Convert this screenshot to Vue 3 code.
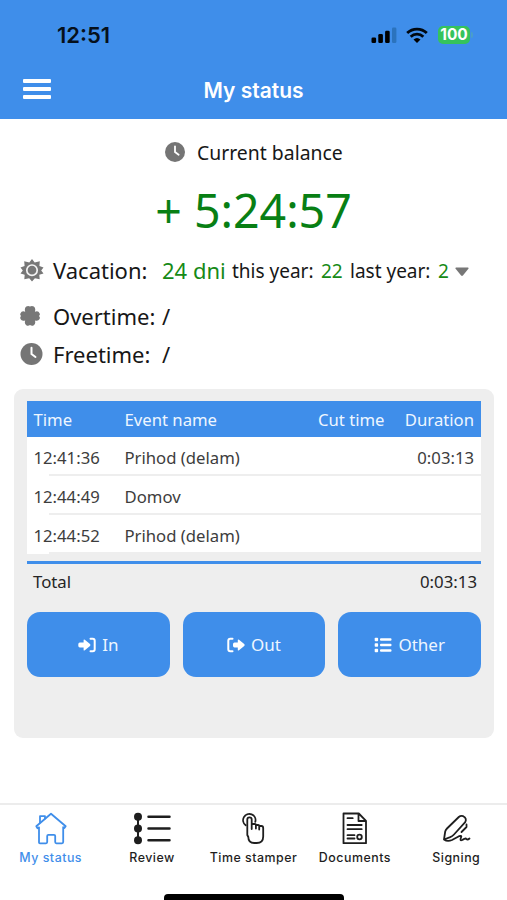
<script setup>
const events = [
  { time: '12:41:36', name: 'Prihod (delam)', cut: '', duration: '0:03:13' },
  { time: '12:44:49', name: 'Domov', cut: '', duration: '' },
  { time: '12:44:52', name: 'Prihod (delam)', cut: '', duration: '' },
]
const tabs = [
  { id: 'home', label: 'My status' },
  { id: 'review', label: 'Review' },
  { id: 'stamper', label: 'Time stamper' },
  { id: 'documents', label: 'Documents' },
  { id: 'signing', label: 'Signing' },
]
</script>

<template>
  <div class="screen">
    <header class="top">
      <div class="statusbar">
        <span class="clock">12:51</span>
        <div class="indicators">
          <svg class="signal" width="26" height="17" viewBox="0 0 26 17">
            <rect x="0.5" y="10.5" width="4.6" height="5.5" rx="1.3" />
            <rect x="7.3" y="7" width="4.6" height="9" rx="1.3" />
            <rect x="14.1" y="3.8" width="4.6" height="12.2" rx="1.3" />
            <rect x="21" y="0.5" width="4.4" height="15.5" rx="1.3" fill="#2b73bd" />
          </svg>
          <svg class="wifi" width="22" height="17" viewBox="0 0 22 17">
            <g fill="none" stroke="#000810" stroke-width="2.8">
              <path d="M1.2 6.1a14 14 0 0 1 19.6 0" />
              <path d="M4.7 9.7a9 9 0 0 1 12.6 0" />
            </g>
            <path d="M7.5 12.5a5.2 5.2 0 0 1 7 0L11 16z" />
          </svg>
          <span class="battery">100</span>
          <span class="battery-tip"></span>
        </div>
      </div>
      <div class="titlebar">
        <div class="burger"><i></i><i></i><i></i></div>
        <h1>My status</h1>
      </div>
    </header>

    <main>
      <div class="balance-label">
        <svg width="20" height="20" viewBox="0 0 22 22">
          <circle cx="11" cy="11" r="11" fill="#757575" />
          <path d="M11 4.8V11l4 3" fill="none" stroke="#fff" stroke-width="2" stroke-linecap="round" />
        </svg>
        <span>Current balance</span>
      </div>
      <div class="balance">+ 5:24:57</div>

      <div class="row vacation">
        <svg class="row-icon" width="24" height="24" viewBox="0 0 24 24">
          <path fill="#777" d="M12 1l2.7 3.4L19.8 3.3l-.4 4.8L23.500 9.500l-2.300 2.900 2.300 3.100-4.200 1.300.4 4.500-4.800-1L12 23.500l-2.800-3.200-4.900 1 .4-4.500L.5 15.500l2.300-3.100L.5 9.500l4.100-1.400-.4-4.800 5.100 1.100z" />
          <circle cx="12" cy="12.200" r="5.200" fill="none" stroke="#f4f4f4" stroke-width="1.700" />
        </svg>
        <span class="row-label">Vacation:</span>
        <span class="days">24 dni</span>
        <span class="small this-year">this year:</span>
        <span class="small green n22">22</span>
        <span class="small last-year">last year:</span>
        <span class="small green n2">2</span>
        <svg class="caret" width="14" height="10" viewBox="0 0 14 10">
          <path d="M1 .6h12q1 .3.4 1.200L7.900 8.500q-.9.900-1.800 0L.6 1.800Q0 .9 1 .6z" fill="#777" />
        </svg>
      </div>
      <div class="row overtime">
        <svg class="row-icon" width="24" height="24" viewBox="0 0 24 24">
          <path fill="#777" d="M10 2.600Q12 1.200 13.800 2.600 16 4 14.900 7.700 18.500 6.600 19.400 8.900 20.600 10.600 19 12q1.600 1.500.4 3.300-1 2-4.500 1.100 1.100 3.500-1.100 4.800-1.900 1.300-3.800-.2-1.900 1.500-3.700.2Q4.100 19.900 5.200 16.400 1.600 17.400.7 15.300-.4 13.400 1.100 12-.5 10.500.7 8.900 1.600 6.600 5.200 7.700 4.100 4 6.300 2.600 8.100 1.200 10 2.600z" />
        </svg>
        <span class="row-label">Overtime:</span><span class="slash">/</span>
      </div>
      <div class="row freetime">
        <svg class="row-icon" width="24" height="24" viewBox="0 0 24 24">
          <circle cx="11.500" cy="12" r="11" fill="#757575" />
          <path d="M11.500 5.800V12l4 3" fill="none" stroke="#fff" stroke-width="2" stroke-linecap="round" />
        </svg>
        <span class="row-label">Freetime:</span><span class="slash">/</span>
      </div>

      <section class="panel">
        <div class="line head">
          <span>Time</span><span>Event name</span><span class="right cut">Cut time</span><span class="right">Duration</span>
        </div>
        <div v-for="e in events" :key="e.time" class="line entry">
          <span>{{ e.time }}</span><span>{{ e.name }}</span><span class="right cut">{{ e.cut }}</span><span class="right">{{ e.duration }}</span>
        </div>
        <div class="rule"></div>
        <div class="total"><span>Total</span><span>0:03:13</span></div>
        <div class="actions">
          <button>
            <svg width="18" height="16" viewBox="0 0 18 16">
              <path fill="#fff" d="M.3 7.200q0-1.800 1.500-1.800h3.800V3.300q0-1.400 1.200-.5L12 7q.9 1 0 2L6.800 13.200q-1.200.9-1.200-.5v-2.100H1.800Q.3 10.600.3 8.800z" />
              <path fill="none" stroke="#fff" stroke-width="2" stroke-linecap="round" d="M12.500 1.700h2.200q2 0 2 2v8.600q0 2-2 2h-2.200" />
            </svg>
            <span>In</span>
          </button>
          <button>
            <svg width="18" height="16" viewBox="0 0 18 16">
              <path fill="#fff" d="M6 7.200q0-1.800 1.500-1.800h3.300V3.300q0-1.400 1.200-.5L17.200 7q.9 1 0 2L12 13.200q-1.200.9-1.200-.5v-2.100H7.500Q6 10.600 6 8.800z" />
              <path fill="none" stroke="#fff" stroke-width="2" stroke-linecap="round" d="M5.500 1.700H3.300q-2 0-2 2v8.600q0 2 2 2h2.200" />
            </svg>
            <span>Out</span>
          </button>
          <button>
            <svg width="18" height="16" viewBox="0 0 18 16">
              <g fill="#fff">
                <rect x=".7" y=".8" width="3.400" height="3.400" rx=".8" /><rect x=".7" y="6.300" width="3.400" height="3.400" rx=".8" /><rect x=".7" y="11.800" width="3.400" height="3.400" rx=".8" />
                <rect x="6" y="1.300" width="11.500" height="2.400" rx="1" /><rect x="6" y="6.800" width="11.500" height="2.400" rx="1" /><rect x="6" y="12.300" width="11.500" height="2.400" rx="1" />
              </g>
            </svg>
            <span>Other</span>
          </button>
        </div>
      </section>
    </main>

    <nav>
      <a v-for="t in tabs" :key="t.id" :class="{ active: t.id === 'home' }">
        <svg v-if="t.id === 'home'" width="40" height="34" viewBox="0 0 40 34" class="outline">
          <path d="M5.300 14.200 20 1.800l14.700 12.400-1.300 1.800-1.200-.9v15q0 1.200-1.200 1.200h-5.600q-1.200 0-1.200-1.200v-6.100q0-1.200-1.200-1.200h-5.600q-1.200 0-1.200 1.200v6.100q0 1.200-1.200 1.200H9.200Q8 31.500 8 30.300v-15l-1.500.9z" />
          <path d="M9 10.500V4.200h5v2.300" />
        </svg>
        <svg v-else-if="t.id === 'review'" width="40" height="34" viewBox="0 0 40 34" class="outline">
          <path d="M6 5v23.500" stroke-width="2" />
          <g fill="currentColor" stroke="none"><circle cx="6" cy="4.800" r="4" /><circle cx="6" cy="16.500" r="4" /><circle cx="6" cy="28.200" r="4" /></g>
          <path d="M16.500 4.800h21M16.500 16.500h21M16.500 28.200h21" stroke-width="2.500" />
        </svg>
        <svg v-else-if="t.id === 'stamper'" width="40" height="34" viewBox="-1.500 0 40 34" class="outline">
          <path d="M11.200 13.200A6.200 6.200 0 1 1 20.800 9.800" />
          <path d="M12.800 23V7.600q0-2.300 2.200-2.300t2.200 2.300v9.500V13q0-1 1.200-1h2q1 0 1 1v3.500V14q0-1 1-1h1.300q1 0 1 1v3.500V15q0-1 1-1h1.200q1.800 0 1.800 2v8.500q0 6.500-6.500 6.500h-2.500q-5.900 0-5.900-6z" />
        </svg>
        <svg v-else-if="t.id === 'documents'" width="40" height="34" viewBox="0 0 40 34" class="outline">
          <path d="M8.500 1.500h15.300l7.200 7.300v22.400H8.500zM23.500 1.700V9H31" />
          <path d="M12.500 6.200h5.200M12.500 13h14.200M12.500 17.200h14.200M12.500 23.200h7M12.500 26.500h7" />
          <circle cx="24.500" cy="25" r="2.300" />
        </svg>
        <svg v-else width="40" height="34" viewBox="0 0 40 34" class="outline">
          <path d="M8 27.500l1.200-8q.4-1.600 1.800-3L22.800 5q2-1.700 4.400-.8 4 2 2 6L18 22.500q-1.800 1.900-3.800 2.700zM8 27.500q3.500 2.500 8 .5l7-3.800q3.300-1.200 2 1.500-1.500 3.500 1.300 2.300 3.200-2.500 4.200-.8 1.200.8 3-.7M30.500 12.500v2.500L25.500 20" />
        </svg>
        <span :class="'label-' + t.id">{{ t.label }}</span>
      </a>
      <div class="home-indicator"></div>
    </nav>
  </div>
</template>

<style>
body { background: #fff; overflow: hidden; }
</style>

<style scoped>
* { box-sizing: border-box; }
.screen { width: 507px; height: 900px; display: flex; flex-direction: column; position: relative; overflow: hidden; background: #fff; color: #171717; font-family: "Noto Sans", sans-serif; white-space: nowrap; }
svg { display: block; flex: none; }
.top { height: 119px; background: #3f8eea; flex: none; }
.statusbar { height: 62px; padding: 8px 34px 0 57px; display: flex; justify-content: space-between; align-items: center; }
.clock { font: 600 22px/24px Inter, sans-serif; color: #06101b; }
.indicators { display: flex; align-items: center; color: #000810; }
.wifi { margin-left: 9px; }
.battery { width: 32px; height: 18px; margin-left: 10px; border-radius: 5px; background: #35c35c; color: #fff; font: 700 15.500px/18px Inter, sans-serif; text-align: center; }
.battery-tip { width: 2px; height: 6px; margin-left: 1px; border-radius: 0 2px 2px 0; background: #4a9fc8; }
.titlebar { height: 57px; display: grid; grid-template-columns: 100px 1fr 100px; align-items: center; }
.burger { padding: 0 0 4px 23px; display: flex; flex-direction: column; gap: 4px; }
.burger i { width: 28px; height: 4px; background: #fff; border-radius: 1px; }
h1 { margin: 0; text-align: center; color: #fff; font: 600 21px/26px Inter, sans-serif; }
main { flex: 1; }
.balance-label { margin-top: 19px; height: 28px; padding-left: 165px; display: flex; align-items: center; gap: 12px; font-size: 19.400px; }
.balance { height: 66px; margin-top: 11px; text-align: center; font-size: 46.500px; line-height: 66px; color: #087f14; }
.row { display: flex; align-items: center; height: 38px; padding-left: 20px; font-size: 22px; }
.row-label { margin-left: 9px; width: 109px; }
.vacation { margin-top: 8px; }
.overtime { margin-top: 8px; }
.days { width: 70px; color: #168a16; }
.small { font-size: 19px; line-height: 26px; padding-top: 1px; }
.this-year { width: 89px; }
.n22 { width: 29px; }
.last-year { width: 88px; }
.n2 { width: 17px; }
.caret { margin-top: 3px; }
.green { color: #168a16; }
.panel { margin: 16px 13px 0 14px; height: 349px; padding: 12px 13px 0; background: #eee; border-radius: 9px; }
.line { display: grid; grid-template-columns: 91px 170px 90px 1fr; align-items: center; padding: 0 7px 0 6.500px; font-size: 16.700px; color: #3d3d3d; }
.head { height: 36px; padding-top: 1px; color: #eef6ff; background: #3f8eea; }
.right { text-align: right; }
.entry { height: 39px; padding-top: 2px; background: linear-gradient(#eee, #eee) 22px 100% / 100% 2px no-repeat #fff; }
.rule { margin-top: 7px; height: 3px; background: #3f8eea; }
.total { display: flex; justify-content: space-between; align-items: center; height: 35px; padding: 0 4px 0 6px; font-size: 16.800px; color: #252525; }
.actions { display: grid; grid-template-columns: repeat(3, 1fr); gap: 13px; margin-top: 13px; }
button { height: 65px; border: 0; border-radius: 13px; background: #3f8eea; color: #eef6ff; display: flex; align-items: center; justify-content: center; gap: 6px; padding: 0; font: 17px "Noto Sans", sans-serif; }
nav { height: 97px; flex: none; border-top: 2px solid #ececec; display: grid; grid-template-columns: repeat(5, 1fr); position: relative; }
nav a { display: flex; flex-direction: column; align-items: center; padding-top: 7px; color: #1e1e1e; }
nav a span { margin-top: 3px; font: 500 12.400px/18px Inter, sans-serif; letter-spacing: .5px; }
nav a.active { color: #3f8eea; }
.outline { fill: none; stroke: currentColor; stroke-width: 1.800; stroke-linecap: round; stroke-linejoin: round; }
.home-indicator { position: absolute; left: 164px; bottom: 0; width: 180px; height: 6px; border-radius: 4px 4px 0 0; background: #000; }
</style>
